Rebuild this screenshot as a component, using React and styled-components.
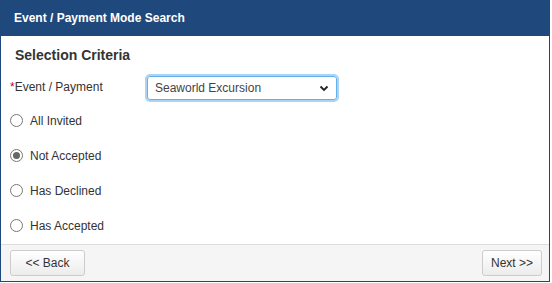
import styled, { createGlobalStyle } from "styled-components";

const Global = createGlobalStyle`
  body {
    margin: 0;
    font-family: "Liberation Sans", Arial, sans-serif;
    background: #fff;
  }
`;

const options = ["All Invited", "Not Accepted", "Has Declined", "Has Accepted"];

export default function App() {
  return (
    <>
      <Global />
      <Panel>
        <Header>Event / Payment Mode Search</Header>
        <Body>
          <Title>Selection Criteria</Title>
          <FieldRow>
            <Label>
              <Req>*</Req>Event / Payment
            </Label>
            <SelectBox>
              <span>Seaworld Excursion</span>
              <svg width="10" height="7" viewBox="0 0 10 7">
                <path d="M1.5 1.5 L5 5 L8.5 1.5" fill="none" stroke="#222" strokeWidth="1.8" />
              </svg>
            </SelectBox>
          </FieldRow>
          {options.map((o) => (
            <RadioRow key={o}>
              <Radio checked={o === "Not Accepted"} />
              {o}
            </RadioRow>
          ))}
        </Body>
        <Footer>
          <Button wide>&lt;&lt; Back</Button>
          <Button>Next &gt;&gt;</Button>
        </Footer>
      </Panel>
    </>
  );
}

const Panel = styled.div`
  width: 550px;
  height: 282px;
  box-sizing: border-box;
  border: 1px solid #1f497d;
  display: flex;
  flex-direction: column;
`;

const Header = styled.div`
  height: 36px;
  margin: -1px -1px 0;
  background: #1f497d;
  color: #fff;
  font-size: 12px;
  font-weight: bold;
  display: flex;
  align-items: center;
  padding-left: 14px;
`;

const Body = styled.div`
  flex: 1;
  padding: 10px 9px 0;
  display: flex;
  flex-direction: column;
`;

const Title = styled.div`
  font-size: 14px;
  font-weight: bold;
  color: #333;
  padding-left: 5px;
  height: 19px;
  line-height: 19px;
`;

const FieldRow = styled.div`
  display: flex;
  align-items: center;
  margin-top: 8px;
  height: 30px;
`;

const Label = styled.div`
  width: 136px;
  font-size: 12px;
  color: #333;
  margin-top: -2px;
`;

const Req = styled.span`
  color: #c00;
`;

const SelectBox = styled.div`
  width: 190px;
  height: 24px;
  box-sizing: border-box;
  border: 1px solid #66afe9;
  border-radius: 3px;
  box-shadow: 0 0 0 2px rgba(102, 175, 233, 0.55);
  display: flex;
  align-items: center;
  justify-content: space-between;
  padding: 0 7px 0 7px;
  font-size: 12px;
  color: #444;
  margin-left: 1px;
`;

const RadioRow = styled.div`
  display: flex;
  align-items: center;
  gap: 7px;
  height: 35px;
  font-size: 12px;
  color: #333;
`;

const Radio = styled.span`
  width: 13px;
  height: 13px;
  box-sizing: border-box;
  border-radius: 50%;
  border: 1px solid #777;
  background: #fff;
  position: relative;
  &::after {
    content: "";
    display: ${(p) => (p.checked ? "block" : "none")};
    position: absolute;
    left: 2px;
    top: 2px;
    width: 7px;
    height: 7px;
    border-radius: 50%;
    background: #666;
  }
`;

const Footer = styled.div`
  height: 37px;
  box-sizing: border-box;
  border-top: 1px solid #ddd;
  background: #f5f5f5;
  display: flex;
  align-items: center;
  justify-content: space-between;
  padding: 0 7px 0 9px;
`;

const Button = styled.button`
  height: 26px;
  width: ${(p) => (p.wide ? "75px" : "60px")};
  padding: 0;
  font-family: "Liberation Sans", Arial, sans-serif;
  font-size: 12px;
  color: #333;
  border: 1px solid #ccc;
  border-radius: 3px;
  background: linear-gradient(#fff, #ececec);
`;
